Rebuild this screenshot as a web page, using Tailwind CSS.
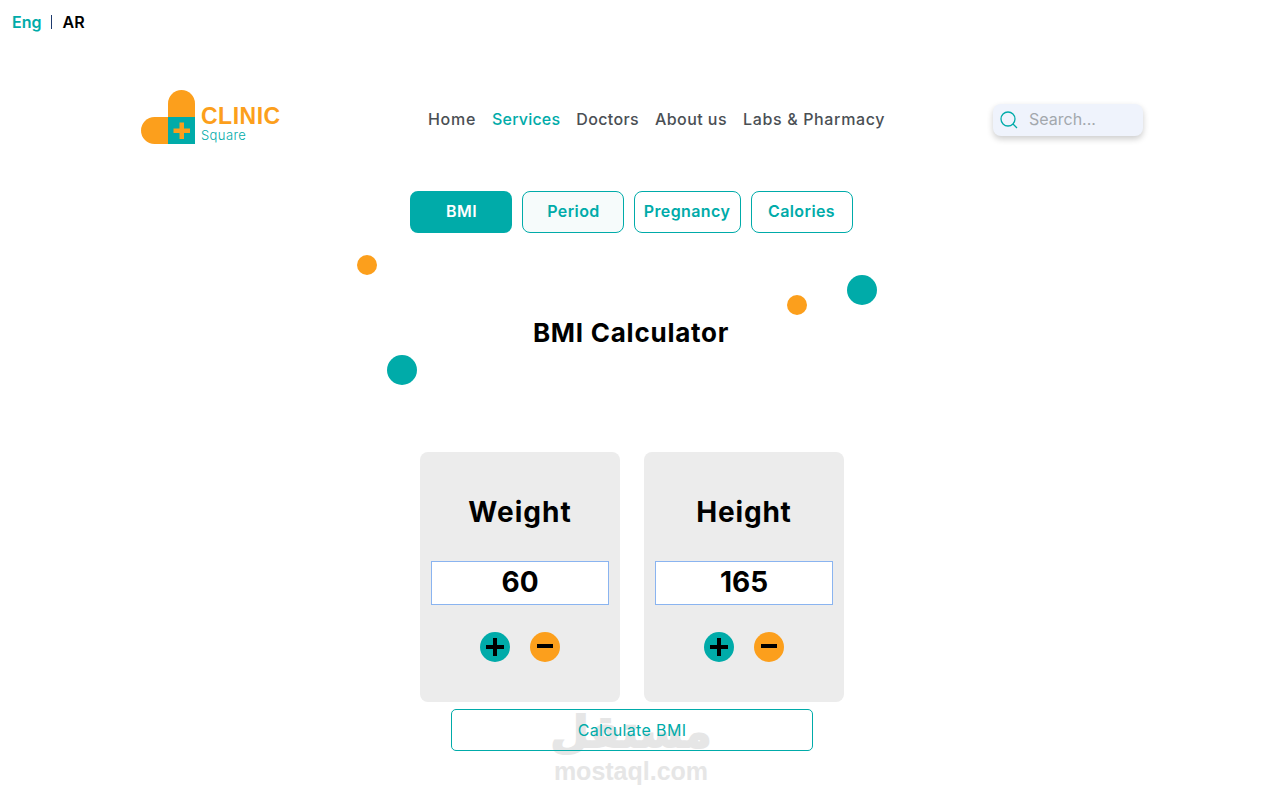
<!DOCTYPE html>
<html lang="en">
  <head>
    <meta charset="utf-8" />
    <meta name="viewport" content="width=device-width, initial-scale=1" />
    <title>BMI Calculator</title>
    <script src="https://cdn.jsdelivr.net/npm/@tailwindcss/browser@4"></script>
  </head>
  <body class="bg-white font-['Inter',sans-serif] text-black h-[799px] overflow-hidden relative">
    <!-- Language switch -->
    <div class="flex items-center h-[20px] pt-[12px] box-content ml-[12px] text-[16px] font-semibold">
      <a class="text-[#00aba9]">Eng</a>
      <span class="w-px h-[14px] bg-[#1e3a6e] ml-[10px] mr-[10px]"></span>
      <a>AR</a>
    </div>

    <!-- Header -->
    <header class="flex items-start mt-[58px] ml-[141px] w-[1002px] h-[54px]">
      <div class="flex w-[287px]">
        <svg width="54" height="54" viewBox="0 0 54 54">
          <path d="M27 27V13.5A13.5 13.5 0 0 1 54 13.5V27Z" fill="#fc9f1c" />
          <path d="M27 27H13.5A13.5 13.5 0 0 0 13.5 54H27Z" fill="#fc9f1c" />
          <rect x="27" y="27" width="27" height="27" fill="#00aba9" />
          <path d="M38.5 32.5h4.5v6h6v4.5h-6v6h-4.5v-6h-6v-4.5h6Z" fill="#fc9f1c" />
        </svg>
        <div class="ml-[6px] mt-[15px]">
          <div class="text-[23px] leading-[22px] font-bold text-[#fc9f1c] tracking-[0.5px] font-['Liberation_Sans',sans-serif]">CLINIC</div>
          <div class="text-[13px] leading-[17px] font-light text-[#00aba9] tracking-[0.4px]">Square</div>
        </div>
      </div>
      <nav class="flex gap-4 mt-[19px] text-[16px] leading-[20px] font-medium text-[#4a4f54]">
        <a class="tracking-[0.7px]">Home</a>
        <a class="tracking-[0.2px] text-[#00aba9]">Services</a>
        <a class="tracking-[0.35px]">Doctors</a>
        <a class="tracking-[0.45px]">About us</a>
        <a class="tracking-[0.65px]">Labs &amp; Pharmacy</a>
      </nav>
      <div class="ml-auto mt-[14px] w-[150px] h-[32px] flex items-center rounded-[8px] bg-[#eff3fc] shadow-[0_3px_6px_rgba(0,0,0,0.2)] pl-[7px]">
        <svg width="18" height="18" viewBox="0 0 18 18" fill="none" stroke="#00aba9" stroke-width="1.3">
          <circle cx="8" cy="8" r="7" />
          <path d="M13 13l4 4" />
        </svg>
        <span class="ml-[11px] pb-[2px] text-[16px] text-[#a3a8ad]">Search...</span>
      </div>
    </header>

    <!-- Tabs -->
    <div class="flex justify-center gap-[10px] mt-[47px] text-[16px] font-semibold tracking-[0.4px]">
      <button class="w-[102px] h-[42px] pb-[2px] pl-[2px] rounded-[8px] bg-[#00aba9] text-white">BMI</button>
      <button class="w-[102px] h-[42px] pb-[2px] pl-[2px] rounded-[8px] border border-[#00aba9] bg-[#f6fbfb] text-[#00aba9]">Period</button>
      <button class="w-[107px] h-[42px] pb-[2px] rounded-[8px] border border-[#00aba9] text-[#00aba9]">Pregnancy</button>
      <button class="w-[102px] h-[42px] pb-[2px] rounded-[8px] border border-[#00aba9] text-[#00aba9]">Calories</button>
    </div>

    <!-- Title with decorative dots -->
    <div class="relative w-[548px] h-[130px] mx-auto mt-[22px] pt-[24px] flex items-center justify-center">
      <span class="absolute left-0 top-0 size-[20px] rounded-full bg-[#fc9f1c]"></span>
      <span class="absolute left-[490px] top-[20px] size-[30px] rounded-full bg-[#00aba9]"></span>
      <span class="absolute left-[430px] top-[40px] size-[20px] rounded-full bg-[#fc9f1c]"></span>
      <span class="absolute left-[30px] top-[100px] size-[30px] rounded-full bg-[#00aba9]"></span>
      <h1 class="text-[26px] font-bold tracking-[0.75px]">BMI Calculator</h1>
    </div>

    <!-- Cards -->
    <div class="flex justify-center gap-[24px] mt-[67px] pl-[2px]">
      <div class="w-[200px] h-[250px] rounded-[8px] bg-[#ececec] flex flex-col items-center">
        <h2 class="text-[28px] leading-[36px] font-bold mt-[42px] tracking-[1px]">Weight</h2>
        <div class="w-[178px] h-[44px] mt-[31px] pb-[2px] bg-white border border-[#8ab4f0] flex items-center justify-center text-[28px] font-bold">60</div>
        <div class="flex gap-[20px] mt-[27px]">
          <button class="size-[30px] rounded-full bg-[#00aba9] flex items-center justify-center">
            <svg width="18" height="18" viewBox="0 0 18 18"><path d="M9 0v18M0 9h18" stroke="#000" stroke-width="4" /></svg>
          </button>
          <button class="size-[30px] rounded-full bg-[#fc9f1c] flex items-center justify-center">
            <svg class="mb-[2px]" width="16" height="16" viewBox="0 0 16 16"><path d="M0 8h16" stroke="#000" stroke-width="4" /></svg>
          </button>
        </div>
      </div>
      <div class="w-[200px] h-[250px] rounded-[8px] bg-[#ececec] flex flex-col items-center">
        <h2 class="text-[28px] leading-[36px] font-bold mt-[42px] tracking-[0.8px]">Height</h2>
        <div class="w-[178px] h-[44px] mt-[31px] pb-[2px] bg-white border border-[#8ab4f0] flex items-center justify-center text-[28px] font-bold">165</div>
        <div class="flex gap-[20px] mt-[27px]">
          <button class="size-[30px] rounded-full bg-[#00aba9] flex items-center justify-center">
            <svg width="18" height="18" viewBox="0 0 18 18"><path d="M9 0v18M0 9h18" stroke="#000" stroke-width="4" /></svg>
          </button>
          <button class="size-[30px] rounded-full bg-[#fc9f1c] flex items-center justify-center">
            <svg class="mb-[2px]" width="16" height="16" viewBox="0 0 16 16"><path d="M0 8h16" stroke="#000" stroke-width="4" /></svg>
          </button>
        </div>
      </div>
    </div>

    <!-- Watermark sits under the button -->
    <div class="absolute left-[531px] top-[706px] w-[200px] flex flex-col items-center text-[#e6e6e6] pointer-events-none">
      <span class="text-[44px] leading-[52px] font-bold font-['DejaVu_Sans',sans-serif] [-webkit-text-stroke:2px_#e6e6e6]">مستقل</span>
      <span class="text-[25px] leading-[26px] font-bold font-['Liberation_Sans',sans-serif]">mostaql.com</span>
    </div>

    <button class="relative block w-[362px] h-[42px] ml-[451px] mt-[7px] rounded-[5px] border border-[#00aba9] text-[16px] tracking-[0.35px] text-[#00aba9]">Calculate BMI</button>
  </body>
</html>
